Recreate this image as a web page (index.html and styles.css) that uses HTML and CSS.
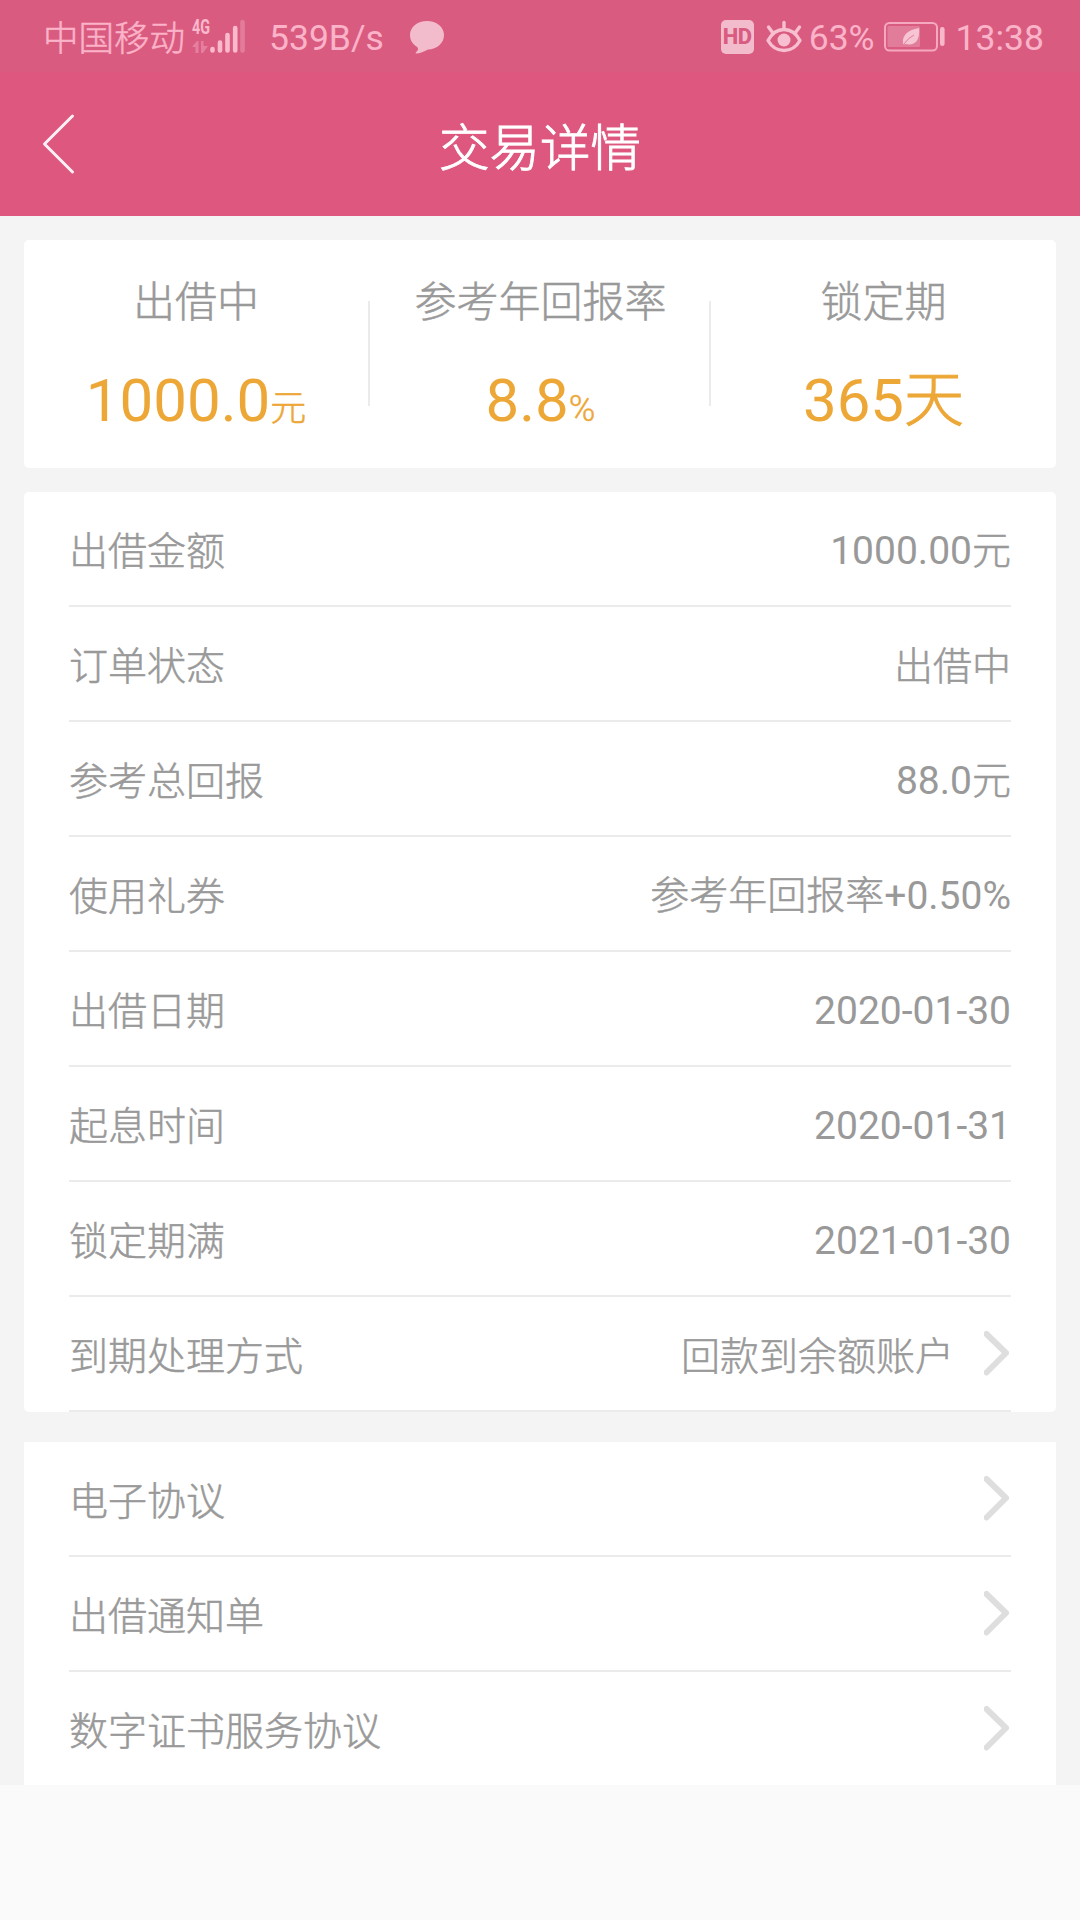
FILE: index.html
```html
<!DOCTYPE html>
<html lang="zh-CN">
<head>
<meta charset="utf-8">
<title>交易详情</title>
<link rel="stylesheet" href="styles.css">
</head>
<body>
<svg class="defs" width="0" height="0" aria-hidden="true">
  <symbol id="chevron" viewBox="0 0 27 45">
    <path d="M2.500 3 L22 22 L2.500 41.500" fill="none" stroke="#dedede" stroke-width="6" stroke-linecap="round" stroke-linejoin="round"/>
  </symbol>
</svg>

<header class="top">
  <div class="status">
    <span class="carrier han">中国移动</span>
    <svg class="signal" width="54" height="36" viewBox="0 0 54 36">
      <text class="network" x="0" y="15" textLength="18" lengthAdjust="spacingAndGlyphs">4G</text>
      <path d="M0 28 L5 22 H6.500 V34 H3.500 V28Z M9 22 H11.500 V27 H16 L11 34 H9Z" fill="#e67f9f"/>
      <g stroke="#fbb9cd" stroke-width="4.600" stroke-linecap="round">
        <path d="M20.500 30V31.500M28 23.500V31.500M35.500 16V31.500M43.200 9V31.500"/>
        <path d="M50.500 3V31.500" stroke="#e37b9b"/>
      </g>
    </svg>
    <span class="speed">539B/s</span>
    <svg class="bubble" width="34" height="34" viewBox="0 0 34 34">
      <path d="M17 1C26.500 1 34 7 34 15S27 29.500 18 29.500C14 31.500 10 33.500 6 33.500 5 33 6 32.500 7.500 30.500 8.500 29 8.300 28 6.500 26.500 2.500 24 0 20 0 15 0 7 7.500 1 17 1Z" fill="#f2bccd"/>
    </svg>
    <div class="status-right">
      <span class="hd">HD</span>
      <svg class="eye" width="36" height="34" viewBox="0 0 36 34">
        <g fill="none" stroke="#f8bfd0" stroke-width="3.400" stroke-linecap="round" stroke-linejoin="round">
          <path d="M2 20.500C6 13 12 9.500 18 9.500S30 13 34 20.500C30 27.500 24 30.500 18 30.500S6 27.500 2 20.500Z"/>
          <path d="M18 2.500V9M2.500 7L6.500 12.500M33.500 7L29.500 12.500"/>
        </g>
        <circle cx="18" cy="20" r="6.500" fill="#f8bfd0"/>
      </svg>
      <span class="percent">63%</span>
      <svg class="battery" width="61" height="30" viewBox="0 0 61 30">
        <rect x="1" y="1" width="52" height="27.500" rx="4.500" fill="none" stroke="#f5a9c0" stroke-width="2"/>
        <rect x="3.500" y="4" width="32.500" height="21" rx="1.500" fill="#e27c9b"/>
        <path d="M35 6C36 16 33 22.500 25 22.500L21.500 22 20 22.500 19 21.500C18 13 24 8 35 6Z" fill="#f6c4d3"/>
        <path d="M20 22Q24 16 30 13" stroke="#e27c9b" stroke-width="1" fill="none"/>
        <rect x="56" y="5" width="4.600" height="19" rx="2.300" fill="#f8b8cb"/>
      </svg>
      <span class="clock">13:38</span>
    </div>
  </div>
  <div class="nav">
    <svg class="back" width="34" height="62" viewBox="0 0 34 62">
      <path d="M30.500 3 L2.500 31 L30.500 59" fill="none" stroke="#fff0f5" stroke-width="3" stroke-linecap="round" stroke-linejoin="round"/>
    </svg>
    <h1 class="title">交易详情</h1>
  </div>
</header>

<main class="content">
  <section class="card summary">
    <div class="stat"><span class="stat-label han">出借中</span><span class="stat-value">1000.0<small class="han">元</small></span></div>
    <div class="stat"><span class="stat-label han">参考年回报率</span><span class="stat-value">8.8<small class="sign">%</small></span></div>
    <div class="stat"><span class="stat-label han">锁定期</span><span class="stat-value">365<span class="unit">天</span></span></div>
  </section>

  <section class="card list">
    <div class="row"><span class="han">出借金额</span><span class="value">1000.00<span class="han">元</span></span></div>
    <div class="row"><span class="han">订单状态</span><span class="value han">出借中</span></div>
    <div class="row"><span class="han">参考总回报</span><span class="value">88.0<span class="han">元</span></span></div>
    <div class="row"><span class="han">使用礼券</span><span class="value"><span class="han">参考年回报率</span>+0.50%</span></div>
    <div class="row"><span class="han">出借日期</span><span class="value">2020-01-30</span></div>
    <div class="row"><span class="han">起息时间</span><span class="value">2020-01-31</span></div>
    <div class="row"><span class="han">锁定期满</span><span class="value">2021-01-30</span></div>
    <div class="row"><span class="han">到期处理方式</span><span class="value han">回款到余额账户</span><svg class="chevron"><use href="#chevron"/></svg></div>
  </section>

  <section class="links list">
    <div class="row"><span class="han">电子协议</span><svg class="chevron"><use href="#chevron"/></svg></div>
    <div class="row"><span class="han">出借通知单</span><svg class="chevron"><use href="#chevron"/></svg></div>
    <div class="row"><span class="han">数字证书服务协议</span><svg class="chevron"><use href="#chevron"/></svg></div>
  </section>
</main>
</body>
</html>
```
FILE: styles.css
```css
* { box-sizing: border-box; }

body {
  margin: 0;
  width: 1080px;
  height: 1920px;
  overflow: hidden;
  background: #fafafa;
  font-family: Roboto, "Noto Sans CJK SC", sans-serif;
  font-weight: 400;
  color: #999;
}

.defs { display: block; }

/* Chinese text: light face, slightly thickened */
.han { font-weight: 300; -webkit-text-stroke: 0.5px currentColor; }

.top { height: 216px; background: #de577f; }

.status {
  display: flex;
  align-items: flex-start;
  height: 72px;
  padding: 0 36px 0 43px;
  background: #d95c80;
  color: #fbb3c9;
  font-size: 35.5px;
  line-height: 76px;
  white-space: nowrap;
}

.carrier { width: 144px; line-height: 78px; }
.signal { margin: 19px 0 0 5px; overflow: visible; }
.network { font-size: 21px; font-weight: 700; fill: #fbb9cd; }
.speed { margin-left: 23px; width: 116px; }
.bubble { margin: 20px 0 0 25px; }

.status-right { display: flex; align-items: flex-start; margin-left: auto; }

.hd {
  width: 33px;
  height: 34px;
  margin-top: 20px;
  border-radius: 5px;
  background: #f2bccd;
  color: #d95c80;
  font-size: 22px;
  font-weight: 800;
  letter-spacing: -0.5px;
  line-height: 33px;
  text-align: center;
}

.eye { margin: 20px 0 0 12px; }
.percent { margin-left: 7px; }
.battery { margin: 22px 0 0 9px; }
.clock { margin-left: 11px; }

.nav {
  display: grid;
  grid-template-columns: 120px 1fr 120px;
  align-items: center;
  height: 144px;
  color: #fff;
}

.back { margin-left: 42px; }

.title {
  margin: 0;
  padding-top: 9px;
  font-size: 50.5px;
  font-weight: 300;
  -webkit-text-stroke: 0.9px currentColor;
  line-height: 72px;
  text-align: center;
}

.content { height: 1569px; padding: 24px 24px 0; background: #f4f4f4; }

.card { border-radius: 5px; background: #fff; }

.summary {
  display: grid;
  grid-template-columns: 346px 341px 345px;
  height: 228px;
  margin-bottom: 24px;
}

.stat {
  display: flex;
  flex-direction: column;
  align-items: center;
  padding-top: 33px;
  background: linear-gradient(#ebebeb, #ebebeb) right 61px / 2px 105px no-repeat;
}

.stat:first-child { padding-right: 2px; }
.stat:last-child { background: none; }
.stat-label { font-size: 42px; line-height: 60px; }

.stat-value {
  margin-top: 28px;
  color: #eda737;
  font-size: 60px;
  line-height: 80px;
}

.stat-value small { font-size: 36px; }
.stat-value .sign { font-weight: 300; -webkit-text-stroke: 0.4px currentColor; }
.unit { font-weight: 300; -webkit-text-stroke: 1px currentColor; }

.list { padding: 0 45px; }

.row {
  display: flex;
  align-items: center;
  height: 115px;
  border-bottom: 2px solid #ebebeb;
  font-size: 39px;
  line-height: 60px;
}

.row > span { padding-top: 4px; }
.row > .han { padding-top: 6px; }

.value { margin-left: auto; }
.chevron { width: 27px; height: 45px; margin: -1px 0 0 30px; }

.links { height: 343px; margin-top: 30px; background: #fff; }
.links .row { justify-content: space-between; }
.links .row:last-child { height: 113px; border-bottom: 0; }
```
